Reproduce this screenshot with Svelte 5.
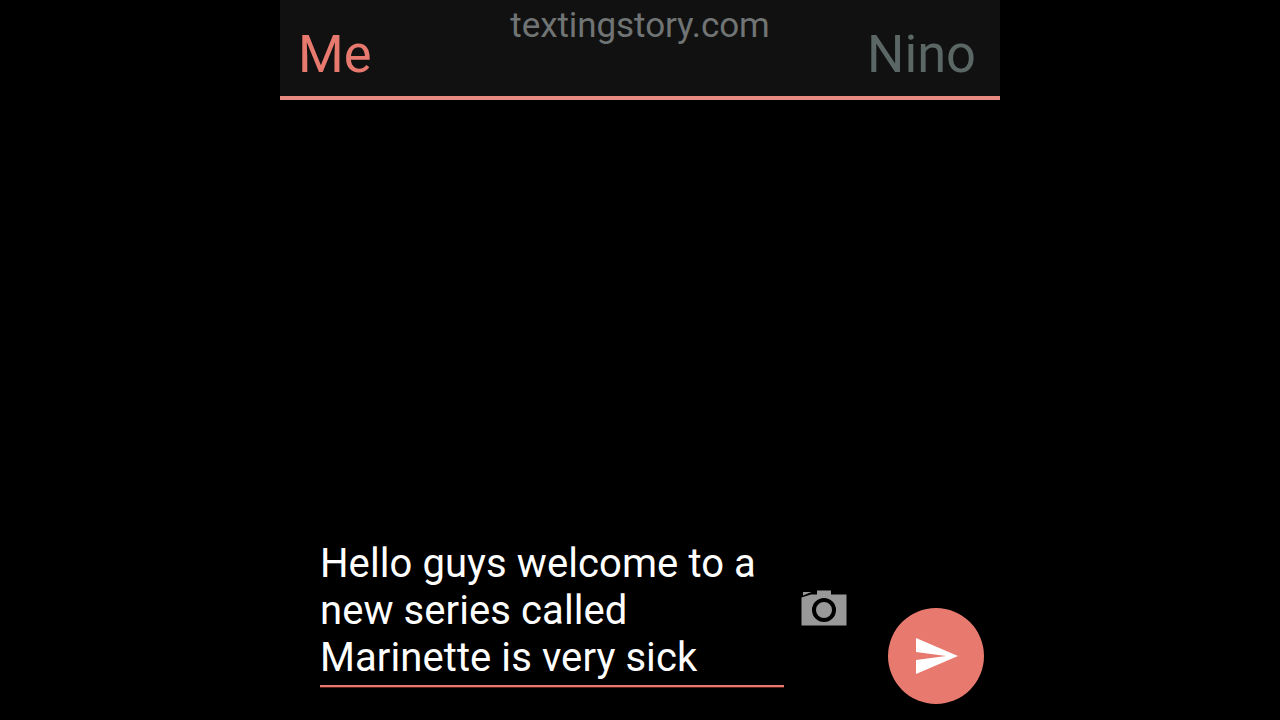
<script lang="ts">
	let message = $state(['Hello guys welcome to a', 'new series called', 'Marinette is very sick']);
	let active = $state('Me');
</script>

<main class="phone">
	<header>
		<button type="button" class="name" class:active={active === 'Me'} onclick={() => (active = 'Me')}>Me</button>
		<span class="site">textingstory.com</span>
		<button type="button" class="name" class:active={active === 'Nino'} onclick={() => (active = 'Nino')}>Nino</button>
	</header>

	<section class="thread"></section>

	<footer>
		<div class="message">
			{#each message as line}
				<div>{line}</div>
			{/each}
		</div>

		<button type="button" class="camera" aria-label="Add photo">
			<svg width="46" height="36" viewBox="0 0 46 36">
				<path fill="#999" d="M2 2h8.500L2 5.500zM.5 7.500 10 4.500H16V.5h14v4H45.500V35.500H.5z" />
				<circle cx="23" cy="20" r="10" fill="#999" stroke="#000" stroke-width="4" />
			</svg>
		</button>

		<button type="button" class="send" aria-label="Send">
			<svg width="42" height="36" viewBox="0 0 42 36">
				<path fill="#fff" d="M0 0 42 18 0 36V22L30 18 0 14z" />
			</svg>
		</button>
	</footer>
</main>

<style>
	:global(body) {
		background: #000;
	}

	.phone {
		width: 720px;
		height: 720px;
		margin: 0 auto;
		display: flex;
		flex-direction: column;
		font-family: Roboto, sans-serif;
		overflow: hidden;
	}

	button {
		border: 0;
		padding: 0;
		background: none;
		font-family: inherit;
		cursor: pointer;
	}

	svg {
		display: block;
	}

	header {
		box-sizing: border-box;
		height: 100px;
		flex: none;
		display: grid;
		grid-template-columns: 1fr auto 1fr;
		align-items: start;
		background: #111;
		border-bottom: 4px solid #e98b80;
	}

	.name {
		justify-self: start;
		margin: 24px 0 0 18px;
		font-size: 52.4px;
		line-height: 61px;
		color: #5b6764;
	}
	.name:last-child {
		justify-self: end;
		margin: 24px 24px 0 0;
	}
	.name.active {
		color: #e8796f;
	}

	.site {
		margin-top: 5px;
		font-size: 35px;
		line-height: 42px;
		letter-spacing: -0.08px;
		color: #707474;
	}

	.thread {
		flex: 1;
	}

	footer {
		display: flex;
		align-items: flex-end;
		padding: 0 16px 16px 40px;
	}

	.message {
		width: 464px;
		margin-bottom: 17px;
		padding-bottom: 4px;
		border-bottom: 2px solid #e8796f;
		box-shadow: 0 1px #5a1d18;
		font-size: 40px;
		line-height: 47px;
		letter-spacing: 0.08px;
		color: #fff;
		white-space: nowrap;
	}

	.camera {
		margin: 0 0 78px 17px;
	}

	.send {
		width: 96px;
		height: 96px;
		margin-left: auto;
		padding-left: 2px;
		display: flex;
		align-items: center;
		justify-content: center;
		border-radius: 50%;
		background: #e8796f;
	}
</style>
